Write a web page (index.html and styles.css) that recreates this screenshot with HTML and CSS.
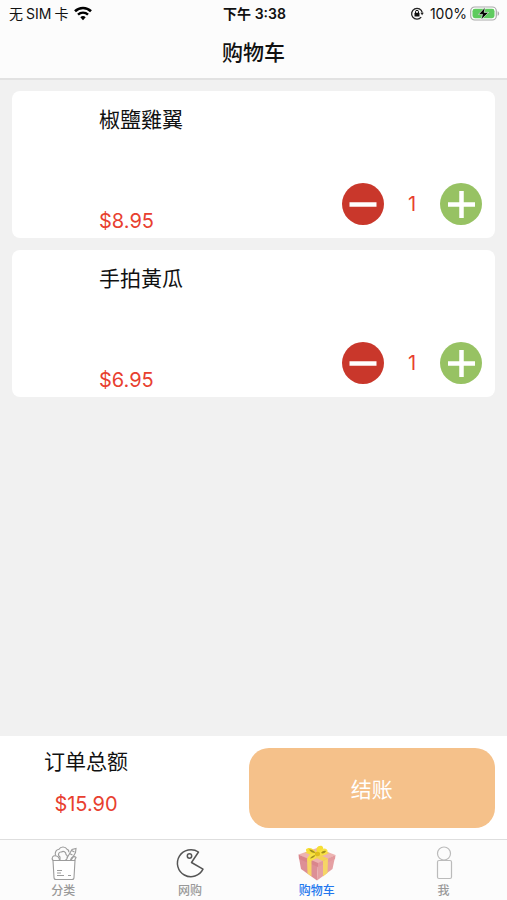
FILE: index.html
```html
<!DOCTYPE html>
<html lang="zh-CN">
<head>
    <meta charset="UTF-8">
    <meta name="viewport" content="width=device-width, initial-scale=1.0">
    <title>购物车</title>
    <link rel="stylesheet" href="styles.css">
</head>
<body>
    <header class="header">
        <div class="status-bar">
            <div class="status-left">
                <span class="carrier"><span>无</span><span>SIM</span><span>卡</span></span>
                <svg width="20" height="16" viewBox="0 0 20 16">
                    <path d="M2 5.2a11.5 11.5 0 0 1 16 0" fill="none" stroke="#000" stroke-width="2.6"/>
                    <path d="M5 8.600a7.200 7.200 0 0 1 10 0" fill="none" stroke="#000" stroke-width="2.4"/>
                    <path d="M7.3 11.200a4 4 0 0 1 5.4 0L10 14.200z"/>
                </svg>
            </div>
            <div class="status-time">下午 3:38</div>
            <div class="status-right">
                <svg width="14" height="14" viewBox="0 0 14 14">
                    <path d="M11.2 10.2A5.4 5.4 0 1 1 12.3 5.600" fill="none" stroke="#222" stroke-width="1.3"/>
                    <path d="M10.4 5.800h3.4l-1.7 2.5z" fill="#222"/>
                    <rect x="4.500" y="5.800" width="5" height="3.8" rx="0.6" fill="#111"/>
                    <path d="M5.500 6V4.800a1.5 1.5 0 0 1 3 0V6" fill="none" stroke="#111" stroke-width="1"/>
                </svg>
                <span>100%</span>
                <svg width="30" height="16" viewBox="0 0 30 16">
                    <rect x="0.7" y="1" width="25.6" height="13" rx="4" fill="#fff" stroke="#aaa" stroke-width="1.2"/>
                    <rect x="2.5" y="2.800" width="22" height="9.4" rx="2.4" fill="#5fcb5f"/>
                    <path d="M27.6 5.2c2 .6 2 4 0 4.6z" fill="#aaa"/>
                    <path d="M15.2 1.300L8.500 8.400h4l-1.500 5.400 7.600-7.400h-4.400z" fill="#000" stroke="#fff" stroke-width=".6"/>
                </svg>
            </div>
        </div>
        <h1 class="title">购物车</h1>
    </header>

    <main class="cart">
        <article class="item">
            <div class="item-image"></div>
            <div class="item-info">
                <h2 class="item-name">椒鹽雞翼</h2>
                <p class="price">$8.95</p>
            </div>
            <div class="stepper">
                <button class="step minus" type="button" aria-label="减少">
                    <svg width="42" height="42" viewBox="0 0 42 42"><path d="M7.500 21.5h27" stroke="#fff" stroke-width="4.500"/></svg>
                </button>
                <span class="count">1</span>
                <button class="step plus" type="button" aria-label="增加">
                    <svg width="42" height="42" viewBox="0 0 42 42"><path d="M8 21.5h27M21.5 8v27" stroke="#fff" stroke-width="4.500"/></svg>
                </button>
            </div>
        </article>

        <article class="item">
            <div class="item-image"></div>
            <div class="item-info">
                <h2 class="item-name">手拍黃瓜</h2>
                <p class="price">$6.95</p>
            </div>
            <div class="stepper">
                <button class="step minus" type="button" aria-label="减少">
                    <svg width="42" height="42" viewBox="0 0 42 42"><path d="M7.500 21.5h27" stroke="#fff" stroke-width="4.500"/></svg>
                </button>
                <span class="count">1</span>
                <button class="step plus" type="button" aria-label="增加">
                    <svg width="42" height="42" viewBox="0 0 42 42"><path d="M8 21.5h27M21.5 8v27" stroke="#fff" stroke-width="4.500"/></svg>
                </button>
            </div>
        </article>
    </main>

    <section class="checkout">
        <div class="total">
            <p class="total-label">订单总额</p>
            <p class="price">$15.90</p>
        </div>
        <button class="pay" type="button">结账</button>
    </section>

    <nav class="tabs">
        <a class="tab" href="#">
            <svg width="40" height="38" viewBox="0 0 40 38" fill="none" stroke="#9c9c9c" stroke-width="1.100">
                <path d="M10 17.500h22l-1 17a2 2 0 0 1-2 2H13a2 2 0 0 1-2-2z" fill="#fff"/>
                <path d="M10 17.500c-2-3 0-5.500 3.500-4.500 2 .6 3 2.500 3 4.500"/>
                <path d="M12.500 12.700c-1-4 1-6 3.500-6.500 1.500-3 6.500-3 8 0 1.500.5 2 1.500 1.800 3"/>
                <path d="M17 17v-3c-3-2-1-5.500 1.500-5 2-1.500 4.500 0 4.500 2.500 2.500 1.500 1.500 5-1 6"/>
                <path d="M24 15l5-8.500 4-1-.5 4-4.500 8M26.500 10.500l3 1.500M28.500 7.500l3 1.500"/>
                <path d="M27.500 17c1-3.500 4-4 5.500-2.500l-1.500 3"/>
                <path d="M14 27.500h5M14 30h4M14 32.500h7M25 32.500h3"/>
            </svg>
            <span>分类</span>
        </a>
        <a class="tab" href="#">
            <svg width="40" height="38" viewBox="0 0 40 38" fill="none" stroke="#555" stroke-width="1.500">
                <path d="M28.500 9A13.500 13.500 0 1 0 33 26.200L21.500 19.500z" stroke-linejoin="round"/>
                <circle cx="19.500" cy="13" r="2.200"/>
            </svg>
            <span>网购</span>
        </a>
        <a class="tab active" href="#">
            <svg width="40" height="38" viewBox="0 0 40 38">
                <path d="M2 15l19 6-1 16.500L4 26z" fill="#dd8f96"/>
                <path d="M21 21l17-7-2.500 12L20 37.500z" fill="#e5a0a3"/>
                <path d="M1.500 11.500L20 5l18.500 7L21 21z" fill="#edb3b1"/>
                <path d="M1.500 11.500L21 20v4L2 16z" fill="#d9858c"/>
                <path d="M21 20l17.500-8-.5 4-17 8z" fill="#e39a9e"/>
                <path d="M10 15.500l4.500 2v16L10.500 30.500zM26 18l5-2.500-.5 14.500-4.500 3.500z" fill="#f6d566"/>
                <path d="M10 15.500L27 8l5.500 2L14.500 17.500zM8 9.500l4.500-1.800L31 15.500 26 18z" fill="#f4d355"/>
                <path d="M20 10.500C17 5 11 3.500 9 6.500c-.5 3 5 6.500 11 4zM20 10.500C18 5 21 2 25 3c3 2.500 0 6.500-5 7.500z" fill="#f6de35"/>
                <path d="M21 11c3-6 8-7 9.500-3.500.5 4-4 6-9.500 3.500zM20 11c-6-1-10 2-9.500 6 4 2 9-1 9.500-6z" fill="#f8e245"/>
                <path d="M12 6.500c3 0 5 1.500 6.500 3.500-3 0-5-1-6.500-3.500zM24 10c1.500-2 3-2.500 5-2-.5 2-3 3-5 2zM13 15.500c1-2 3-3 5.500-3.500-1 2-3 3.500-5.500 3.500z" fill="#a28f20"/>
                <ellipse cx="20.500" cy="11" rx="2.600" ry="2.300" fill="#dfbd1c"/>
            </svg>
            <span>购物车</span>
        </a>
        <a class="tab" href="#">
            <svg width="40" height="38" viewBox="0 0 40 38" fill="none" stroke="#bbb" stroke-width="1.200">
                <circle cx="20" cy="10.500" r="6.500"/>
                <rect x="13.500" y="17.500" width="14" height="18" rx="1.500"/>
            </svg>
            <span>我</span>
        </a>
    </nav>
</body>
</html>
```

FILE: styles.css
```css
* {
    box-sizing: border-box;
}
body {
    display: flex;
    flex-direction: column;
    min-height: 100vh;
    margin: 0;
    background: #f1f1f1;
    color: #111;
    font-family: Inter, "Noto Sans CJK SC", sans-serif;
}
h1, h2, p {
    margin: 0;
}
button {
    border: none;
    padding: 0;
    cursor: pointer;
    font-family: inherit;
}
.header {
    background: #fcfcfc;
    border-bottom: 2px solid #e2e2e2;
}
.status-bar {
    display: grid;
    grid-template-columns: 1fr auto 1fr;
    align-items: center;
    height: 28px;
    padding: 0 7px 0 9px;
    font-size: 14px;
    line-height: 20px;
}
.status-left, .status-right {
    display: flex;
    align-items: center;
    gap: 5px;
}
.status-right {
    justify-content: flex-end;
    gap: 3px;
}
.status-right span {
    margin-left: 3px;
}
.carrier {
    display: flex;
    gap: 3px;
}
.status-time {
    font-weight: 600;
}
.title {
    padding: 10px 0;
    font-size: 21px;
    font-weight: 500;
    line-height: 30px;
    text-align: center;
}
.cart {
    flex: 1;
    display: flex;
    flex-direction: column;
    gap: 12px;
    padding: 11px 12px;
}
.item {
    display: flex;
    min-height: 147px;
    padding: 13px 13px 1px 12px;
    border-radius: 8px;
    background: #fff;
}
.item-image {
    width: 75px;
}
.item-info {
    flex: 1;
    display: flex;
    flex-direction: column;
    justify-content: space-between;
}
.item-name, .total-label {
    font-size: 21px;
    font-weight: 400;
    line-height: 32px;
}
.item-name {
    font-family: Inter, "Noto Sans CJK TC", sans-serif;
}
.price, .count {
    color: #e8402f;
    font-size: 20px;
    line-height: 32px;
}
.stepper {
    display: flex;
    align-items: center;
    align-self: flex-end;
    margin-bottom: 12px;
}
.count {
    width: 56px;
    text-align: center;
}
.step {
    width: 42px;
    height: 42px;
    border-radius: 50%;
}
.step svg {
    display: block;
}
.minus {
    background: #c9372b;
}
.plus {
    background: #97c263;
}
.checkout {
    display: flex;
    justify-content: space-between;
    padding: 12px 12px 11px;
    background: #fff;
}
.total {
    display: flex;
    flex-direction: column;
    justify-content: space-between;
    width: 148px;
    padding-bottom: 8px;
    text-align: center;
}
.total-label {
    line-height: 28px;
}
.pay {
    width: 51%;
    height: 80px;
    border-radius: 20px;
    background: #f5c18a;
    color: #fff;
    font-size: 21px;
}
.tabs {
    display: grid;
    grid-template-columns: repeat(4, 1fr);
    height: 61px;
    border-top: 1px solid #dedede;
    background: #fcfcfc;
}
.tab {
    display: flex;
    flex-direction: column;
    align-items: center;
    padding-top: 3px;
    color: #999;
    font-size: 12px;
    font-weight: 500;
    line-height: 20px;
    text-decoration: none;
}
.tab.active {
    color: #2377ee;
}
```
